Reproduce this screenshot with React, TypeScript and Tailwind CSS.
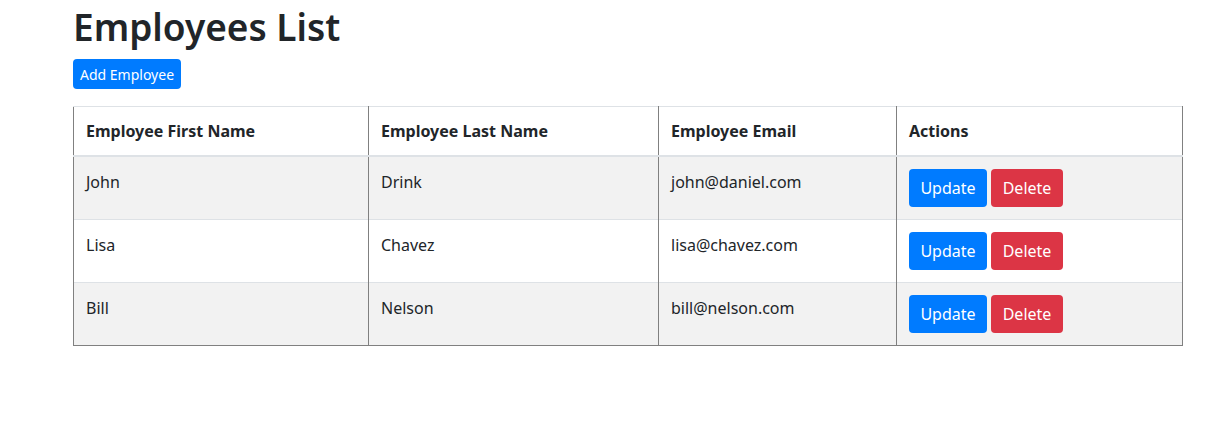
const employees = [
  { first: 'John', last: 'Drink', email: 'john@daniel.com' },
  { first: 'Lisa', last: 'Chavez', email: 'lisa@chavez.com' },
  { first: 'Bill', last: 'Nelson', email: 'bill@nelson.com' },
];

export default function App() {
  return (
    <div className="min-h-[430px] bg-white text-[#212529] font-['Noto_Sans',sans-serif]">
      <div className="ml-[73px] w-[1110px]">
        <h1 className="text-[37px] leading-[48px] font-semibold mb-[8px] pt-[5px] -mt-[2px]">Employees List</h1>
        <button className="h-[30px] px-[7px] rounded-[4px] bg-[#007bff] text-white text-[14px]">
          Add Employee
        </button>

        {/* Table */}
        <table className="w-full mt-[17px] border-collapse text-[16px] border-b border-b-[#808080]">
          <thead>
            <tr className="h-[49px]">
              <th className="w-[295px] px-[12px] text-left font-bold border-x border-x-[#808080] border-t border-t-[#dee2e6] border-b-2 border-b-[#dee2e6]">
                Employee First Name
              </th>
              <th className="w-[290px] px-[12px] text-left font-bold border-x border-x-[#808080] border-t border-t-[#dee2e6] border-b-2 border-b-[#dee2e6]">
                Employee Last Name
              </th>
              <th className="w-[238px] px-[12px] text-left font-bold border-x border-x-[#808080] border-t border-t-[#dee2e6] border-b-2 border-b-[#dee2e6]">
                Employee Email
              </th>
              <th className="px-[12px] text-left font-bold border-x border-x-[#808080] border-t border-t-[#dee2e6] border-b-2 border-b-[#dee2e6]">
                Actions
              </th>
            </tr>
          </thead>
          <tbody>
            {employees.map((e, i) => (
              <tr key={e.email} className={i % 2 === 0 ? 'bg-[#f2f2f2]' : 'bg-white'}>
                <td className="px-[12px] pt-[13px] align-top leading-[24px] border-x border-x-[#808080] border-t border-t-[#dee2e6]">
                  {e.first}
                </td>
                <td className="px-[12px] pt-[13px] align-top leading-[24px] border-x border-x-[#808080] border-t border-t-[#dee2e6]">
                  {e.last}
                </td>
                <td className="px-[12px] pt-[13px] align-top leading-[24px] border-x border-x-[#808080] border-t border-t-[#dee2e6]">
                  {e.email}
                </td>
                <td className="px-[12px] py-[12px] align-top border-x border-x-[#808080] border-t border-t-[#dee2e6]">
                  <div className="flex gap-[4px]">
                    <button className="h-[38px] w-[78px] rounded-[4px] bg-[#007bff] text-white">Update</button>
                    <button className="h-[38px] w-[72px] rounded-[4px] bg-[#dc3545] text-white">Delete</button>
                  </div>
                </td>
              </tr>
            ))}
          </tbody>
        </table>
      </div>
    </div>
  );
}
